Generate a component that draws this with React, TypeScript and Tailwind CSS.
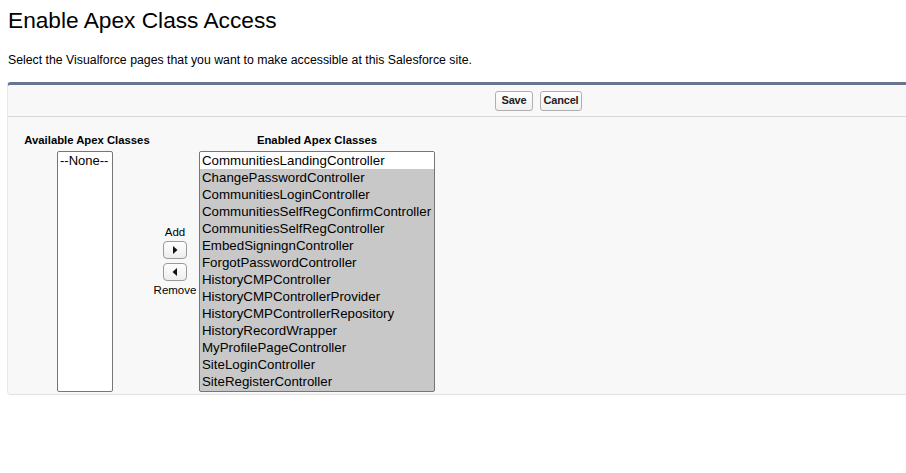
import React from "react";

const enabled = [
  "CommunitiesLandingController",
  "ChangePasswordController",
  "CommunitiesLoginController",
  "CommunitiesSelfRegConfirmController",
  "CommunitiesSelfRegController",
  "EmbedSigningnController",
  "ForgotPasswordController",
  "HistoryCMPController",
  "HistoryCMPControllerProvider",
  "HistoryCMPControllerRepository",
  "HistoryRecordWrapper",
  "MyProfilePageController",
  "SiteLoginController",
  "SiteRegisterController",
];

function ArrowBtn({ dir }: { dir: "right" | "left" }) {
  return (
    <div className="w-[24px] h-[18px] rounded-[4px] border border-[#9a9a9a] bg-gradient-to-b from-white to-[#ededed] flex items-center justify-center">
      <svg width="6" height="10" viewBox="0 0 6 10">
        {dir === "right" ? (
          <polygon points="1,1 5.5,5 1,9" fill="#111" />
        ) : (
          <polygon points="5,1 0.5,5 5,9" fill="#111" />
        )}
      </svg>
    </div>
  );
}

export default function App() {
  return (
    <div
      className="w-[906px] h-[473px] bg-white overflow-hidden text-black"
      style={{ fontFamily: '"Liberation Sans", Arial, sans-serif' }}
    >
      <h1 className="pl-[8px] pt-[8px] text-[22.7px] leading-[25px] font-normal">
        Enable Apex Class Access
      </h1>
      <p className="pl-[8px] mt-[20px] text-[12.3px] leading-[14px]">
        Select the Visualforce pages that you want to make accessible at this Salesforce site.
      </p>
      <div className="ml-[7px] mt-[15px] w-[1100px] bg-[#f8f8f8] border-t-[3px] border-[#6a7490] rounded-tl-[4px] rounded-bl-[4px] border-b border-b-[#e0e0e0] border-l border-l-[#e8e8e8]">
        <div className="h-[32px] border-b border-[#d6d6d6] flex items-center pl-[487px] gap-[7px]">
          <button className="h-[20px] w-[38px] rounded-[3px] border border-[#b0b0b0] bg-gradient-to-b from-white to-[#f0f0f0] text-[11px] font-bold text-[#222] tracking-[-0.2px]">
            Save
          </button>
          <button className="h-[20px] w-[42px] rounded-[3px] border border-[#b0b0b0] bg-gradient-to-b from-white to-[#f0f0f0] text-[11px] font-bold text-[#222] tracking-[-0.2px]">
            Cancel
          </button>
        </div>
        <div className="pt-[17px] pb-[2px]">
          <div className="flex pl-[6px] text-[11.3px] leading-[13px] font-bold">
            <div className="w-[146px] text-center">Available Apex Classes</div>
            <div className="ml-[39px] w-[236px] text-center">Enabled Apex Classes</div>
          </div>
          <div className="flex items-start mt-[4px]">
            <div className="ml-[49px] w-[56px] h-[241px] border border-[#767676] rounded-[2px] bg-white text-[13px] leading-[17px] px-[2px]">
              --None--
            </div>
            <div className="ml-[39px] w-[46px] mt-[74px] flex flex-col items-center text-[11.5px] leading-[14px]">
              <div>Add</div>
              <div className="mt-[2px]">
                <ArrowBtn dir="right" />
              </div>
              <div className="mt-[4px]">
                <ArrowBtn dir="left" />
              </div>
              <div className="mt-[2px]">Remove</div>
            </div>
            <div className="ml-[1px] w-[236px] h-[241px] border border-[#767676] rounded-[2px] bg-[#c8c8c8] overflow-hidden">
              {enabled.map((name, i) => (
                <div
                  key={name}
                  className={`h-[17px] text-[13.3px] leading-[17px] pl-[2px] whitespace-nowrap ${
                    i === 0 ? "bg-white" : "bg-[#c8c8c8]"
                  }`}
                >
                  {name}
                </div>
              ))}
            </div>
          </div>
        </div>
      </div>
    </div>
  );
}
